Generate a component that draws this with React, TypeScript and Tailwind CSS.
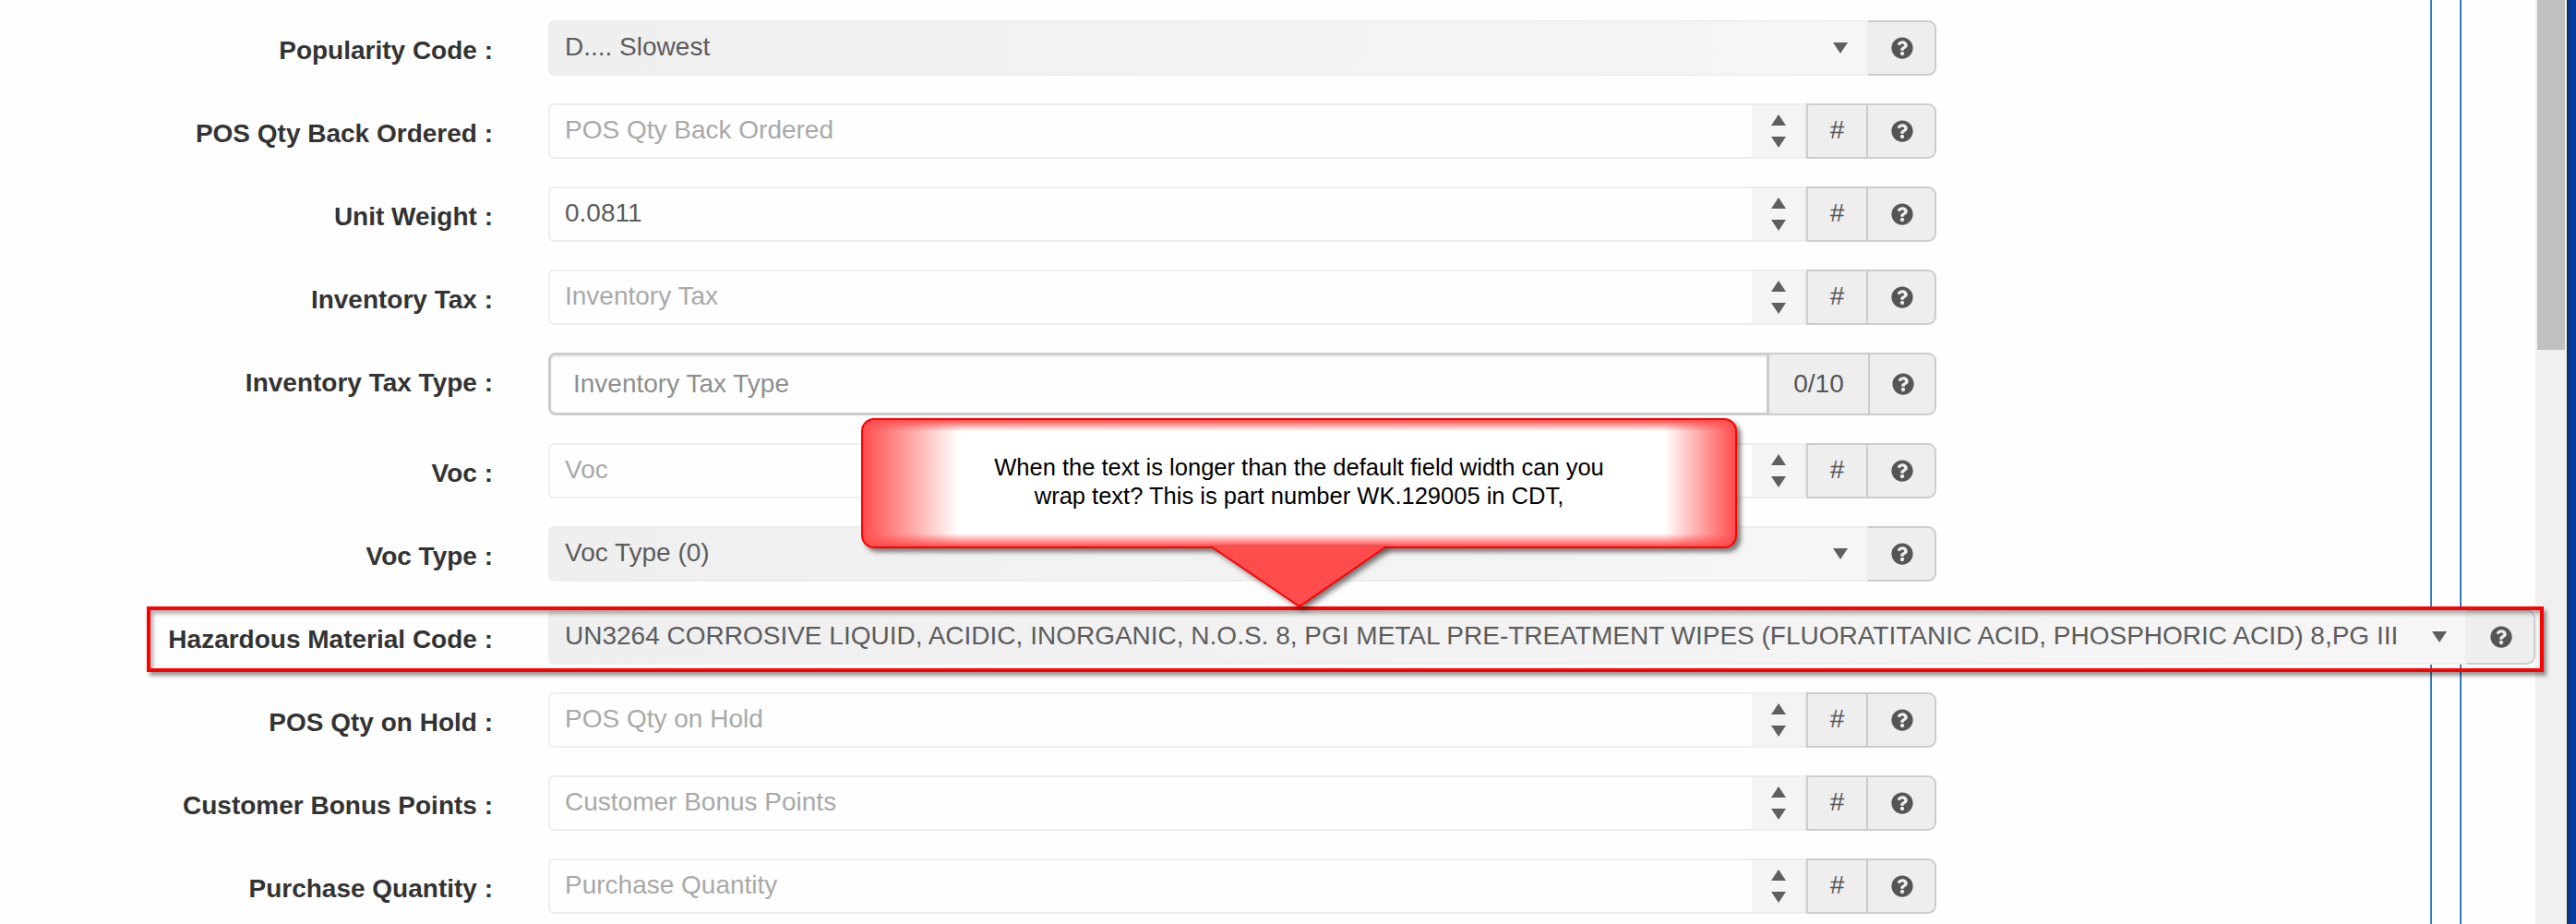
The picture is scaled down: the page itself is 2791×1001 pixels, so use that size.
import { FaQuestionCircle } from "react-icons/fa";

type Kind = "select" | "number" | "text";
type Row = { label: string; kind: Kind; value?: string; placeholder?: string };

const rows: Row[] = [
  { label: "Popularity Code :", kind: "select", value: "D.... Slowest" },
  { label: "POS Qty Back Ordered :", kind: "number", placeholder: "POS Qty Back Ordered" },
  { label: "Unit Weight :", kind: "number", value: "0.0811" },
  { label: "Inventory Tax :", kind: "number", placeholder: "Inventory Tax" },
  { label: "Inventory Tax Type :", kind: "text", placeholder: "Inventory Tax Type" },
  { label: "Voc :", kind: "number", placeholder: "Voc" },
  { label: "Voc Type :", kind: "select", value: "Voc Type (0)" },
  {
    label: "Hazardous Material Code :",
    kind: "select",
    value:
      "UN3264 CORROSIVE LIQUID, ACIDIC, INORGANIC, N.O.S. 8, PGI METAL PRE-TREATMENT WIPES (FLUORATITANIC ACID, PHOSPHORIC ACID) 8,PG III",
  },
  { label: "POS Qty on Hold :", kind: "number", placeholder: "POS Qty on Hold" },
  { label: "Customer Bonus Points :", kind: "number", placeholder: "Customer Bonus Points" },
  { label: "Purchase Quantity :", kind: "number", placeholder: "Purchase Quantity" },
];

function Triangle({ up }: { up?: boolean }) {
  return (
    <svg width="16" height="12" viewBox="0 0 16 12" className="block shrink-0">
      <polygon points={up ? "8,0 16,12 0,12" : "0,0 16,0 8,12"} fill="#5f5f5f" />
    </svg>
  );
}

function HelpAddon({ bordered }: { bordered?: boolean }) {
  return (
    <div
      className={
        "flex w-[74px] shrink-0 items-center justify-center rounded-r-[9px] border-y-2 border-r-2 border-[#cccccc] bg-[#eeeeee] pl-[2px] " +
        (bordered ? "border-l-2" : "")
      }
    >
      <FaQuestionCircle className="-mt-[1px] text-[24px] text-[#555555]" />
    </div>
  );
}

function Field({ row }: { row: Row }) {
  const textClass = row.value ? "text-[#5c5c5c]" : "text-[#a9a9a9]";
  if (row.kind === "select") {
    const wide = row.label.startsWith("Hazardous");
    return (
      <div className={"relative z-10 flex h-[60px] " + (wide ? "w-[2153px]" : "w-[1504px]")}>
        <div className="flex min-w-0 flex-1 items-center justify-between rounded-l-[6px] border-2 border-[#eeeeee] bg-[linear-gradient(100deg,#efefef,#f6f6f6)] pl-[16px] pr-[20px]">
          <span className={"-mt-[3px] whitespace-nowrap text-[28px] " + textClass}>{row.value}</span>
          <Triangle />
        </div>
        <HelpAddon />
      </div>
    );
  }
  if (row.kind === "text") {
    return (
      <div className="flex h-[68px] w-[1504px]">
        <div className="flex flex-1 items-center rounded-l-[8px] border-[3px] border-[#cccccc] pl-[24px] shadow-[inset_0_2px_2px_rgba(0,0,0,0.08)]">
          <span className="text-[28px] text-[#8f8f8f]">{row.placeholder}</span>
        </div>
        <div className="flex w-[107px] items-center justify-center border-y-2 border-[#cccccc] bg-[#eeeeee] text-[28px] text-[#555555]">
          0/10
        </div>
        <HelpAddon bordered />
      </div>
    );
  }
  return (
    <div className="flex h-[60px] w-[1504px]">
      <div className="flex flex-1 items-stretch overflow-hidden rounded-l-[6px] border-2 border-[#eeeeee] pl-[16px]">
        <span className={"-mt-[3px] flex flex-1 items-center text-[28px] " + textClass}>
          {row.value ?? row.placeholder}
        </span>
        <div className="flex w-[57px] flex-col items-center justify-center gap-[12px] bg-[#f4f4f4]">
          <Triangle up />
          <Triangle />
        </div>
      </div>
      <div className="flex w-[67px] items-center justify-center border-2 border-[#cccccc] bg-[#eeeeee] text-[28px] text-[#555555]">
        <span className="-mt-[2px]">#</span>
      </div>
      <HelpAddon />
    </div>
  );
}

export default function App() {
  return (
    <div className="flex h-[1001px] w-[2791px] overflow-hidden bg-[#fefefe] font-['Liberation_Sans',Arial,sans-serif]">
      <main className="relative flex-1">
        <div className="absolute inset-y-0 left-[2633px] w-[34px] border-x-2 border-[#3379bd]" />

        <div className="flex flex-col gap-[30px] pt-[22px]">
          {rows.map((row) => (
            <div key={row.label} className="flex items-start">
              <label className="w-[534px] shrink-0 whitespace-pre pt-[18px] text-right text-[28px] leading-[30px] font-bold text-[#333333]">
                {row.label}
              </label>
              <div className="ml-[60px]">
                <Field row={row} />
              </div>
            </div>
          ))}
        </div>

        {/* Annotation: red highlight box */}
        <div className="absolute left-[159px] top-[657px] z-20 h-[71px] w-[2597px] border-4 border-[#ff0000] shadow-[3px_4px_4px_rgba(0,0,0,0.4),inset_3px_4px_4px_rgba(0,0,0,0.3)]" />

        {/* Annotation: callout */}
        <div className="absolute left-[933px] top-[453px] z-30 flex h-[141px] w-[949px] items-center justify-center rounded-[14px] border-2 border-[#ff0000] bg-white bg-[linear-gradient(to_right,#ff4d4d,#ff4d4d00_104px),linear-gradient(to_left,#ff4d4d,#ff4d4d00_76px),linear-gradient(to_bottom,#ff4d4d,#ff4d4d00_12px),linear-gradient(to_top,#ff4d4d,#ff4d4d00_14px)] pb-[4px] text-center text-[25.5px] leading-[31px] text-black shadow-[4px_4px_5px_rgba(0,0,0,0.5)]">
          <p>
            When the text is longer than the default field width can you
            <br />
            wrap text? This is part number WK.129005 in CDT,
          </p>
        </div>
        <svg
          width="192"
          height="68"
          viewBox="0 0 192 68"
          className="absolute left-[1311px] top-[591px] z-30 overflow-visible drop-shadow-[4px_3px_3px_rgba(0,0,0,0.55)]"
        >
          <polygon points="1,1 97,66 191,1" fill="#ff4d4d" />
          <polyline points="1,1 97,66 191,1" fill="none" stroke="#ff0000" strokeWidth="2" />
        </svg>
      </main>

      <div className="w-[34px] shrink-0 bg-[#f0f0f0] px-[2px]">
        <div className="h-[379px] bg-[#c0c0c0]" />
      </div>
      <div className="w-[10px] shrink-0 border-l-2 border-[#1b2a5a] bg-[#083b9e]" />
    </div>
  );
}
